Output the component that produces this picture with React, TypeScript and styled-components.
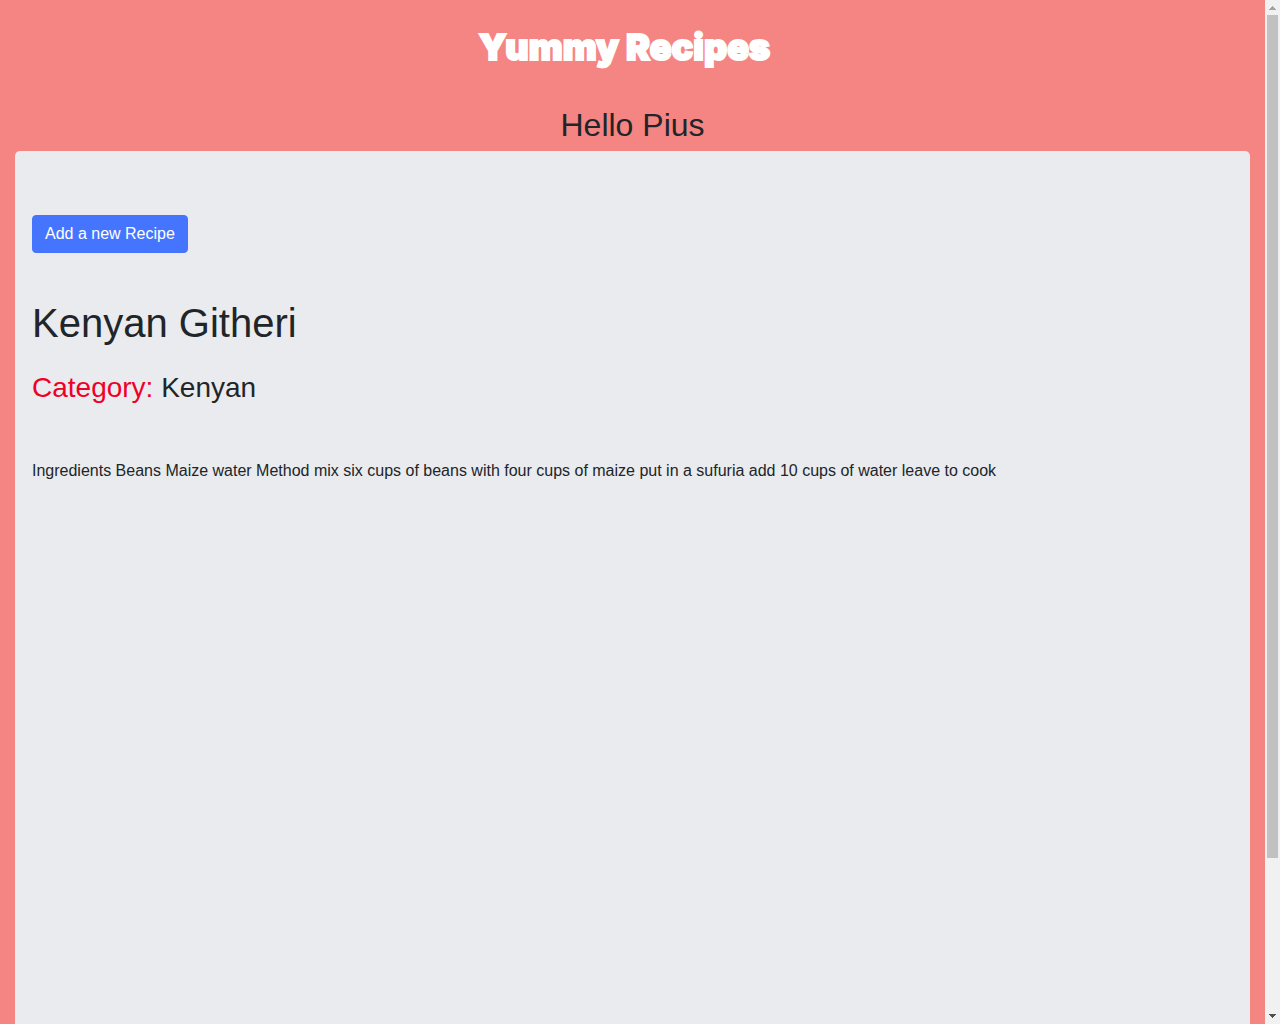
import React, { useEffect, useRef, useState } from "react";
import styled, { createGlobalStyle } from "styled-components";

const GlobalStyle = createGlobalStyle`
  *, *::before, *::after { box-sizing: border-box; }
  body {
    margin: 0;
    background: #f58582;
    color: #212529;
    font: 400 16px/24px "Liberation Sans", Arial, sans-serif;
  }
`;

const Shell = styled.div`
  display: flex;
  height: 100vh;
`;

const Viewport = styled.div`
  flex: 1;
  min-width: 0;
  overflow-y: auto;
  scrollbar-width: none;
`;

const ScrollBar = styled.div`
  display: flex;
  flex-direction: column;
  width: 15px;
  background: #f1f1f1;
`;

const ScrollButton = styled.button<{ $color: string }>`
  display: block;
  height: 15px;
  padding: 0;
  border: 0;
  background: transparent;
  color: ${(p) => p.$color};
  line-height: 0;
`;

const Track = styled.div`
  flex: 1;
  padding: 0 2px;
`;

const Thumb = styled.div`
  background: #c1c1c1;
`;

const Navbar = styled.nav`
  display: flex;
  justify-content: center;
  padding: 16px;
`;

const Brand = styled.a`
  margin-right: 16px;
  color: #fff;
  font: 900 36px/62px Inter, "Liberation Sans", sans-serif;
  text-decoration: none;
  -webkit-text-stroke: 2px #fff;
`;

const Page = styled.main`
  padding: 12px 15px 32px;
`;

const Greeting = styled.h2`
  margin: 0 0 7px;
  font-size: 32px;
  line-height: 38px;
  font-weight: 400;
  text-align: center;
`;

const Panel = styled.section`
  min-height: 1025px;
  padding: 64px 17px;
  border-radius: 5px;
  background: #e9ebee;
`;

const AddButton = styled.button`
  display: block;
  padding: 6px 12px;
  border: 1px solid #4575ff;
  border-radius: 4px;
  background: #4575ff;
  color: #fff;
  font: inherit;
  cursor: pointer;
`;

const RecipeTitle = styled.h1`
  margin: 48px 0 27px;
  font-size: 40px;
  line-height: 44px;
  font-weight: 400;
`;

const Category = styled.h3`
  margin: 0 0 55px;
  font-size: 28px;
  line-height: 32px;
  font-weight: 400;
`;

const CategoryLabel = styled.span`
  color: #f00028;
`;

const Description = styled.p`
  margin: 0;
`;

export default function App() {
  const view = useRef<HTMLDivElement>(null);
  const [scroll, setScroll] = useState({ size: 100, top: 0 });

  const measure = () => {
    const el = view.current;
    if (!el) return;
    setScroll({
      size: (el.clientHeight / el.scrollHeight) * 100,
      top: (el.scrollTop / el.scrollHeight) * 100,
    });
  };

  useEffect(() => {
    measure();
    window.addEventListener("resize", measure);
    return () => window.removeEventListener("resize", measure);
  }, []);

  const scrollBy = (top: number) => view.current?.scrollBy({ top });

  return (
    <Shell>
      <GlobalStyle />
      <Viewport ref={view} onScroll={measure}>
        <Navbar>
          <Brand href="#">Yummy Recipes</Brand>
        </Navbar>
        <Page>
          <Greeting>Hello Pius</Greeting>
          <Panel>
            <AddButton type="button">Add a new Recipe</AddButton>
            <RecipeTitle>Kenyan Githeri</RecipeTitle>
            <Category>
              <CategoryLabel>Category:</CategoryLabel> Kenyan
            </Category>
            <Description>
              Ingredients Beans Maize water Method mix six cups of beans with
              four cups of maize put in a sufuria add 10 cups of water leave to
              cook
            </Description>
          </Panel>
        </Page>
      </Viewport>
      <ScrollBar>
        <ScrollButton type="button" aria-label="Scroll up" $color="#a3a3a3" onClick={() => scrollBy(-40)}>
          <svg width="15" height="15" fill="currentColor" shapeRendering="crispEdges">
            <path d="M7 6h1v1h1v1h1v1h1v1H4V9h1V8h1V7h1z" />
          </svg>
        </ScrollButton>
        <Track>
          <Thumb style={{ height: `${scroll.size}%`, transform: `translateY(${(scroll.top / scroll.size) * 100}%)` }} />
        </Track>
        <ScrollButton type="button" aria-label="Scroll down" $color="#505050" onClick={() => scrollBy(40)}>
          <svg width="15" height="15" fill="currentColor" shapeRendering="crispEdges">
            <path d="M4 5h7v1h-1v1H9v1H8v1H7V8H6V7H5V6H4z" />
          </svg>
        </ScrollButton>
      </ScrollBar>
    </Shell>
  );
}
